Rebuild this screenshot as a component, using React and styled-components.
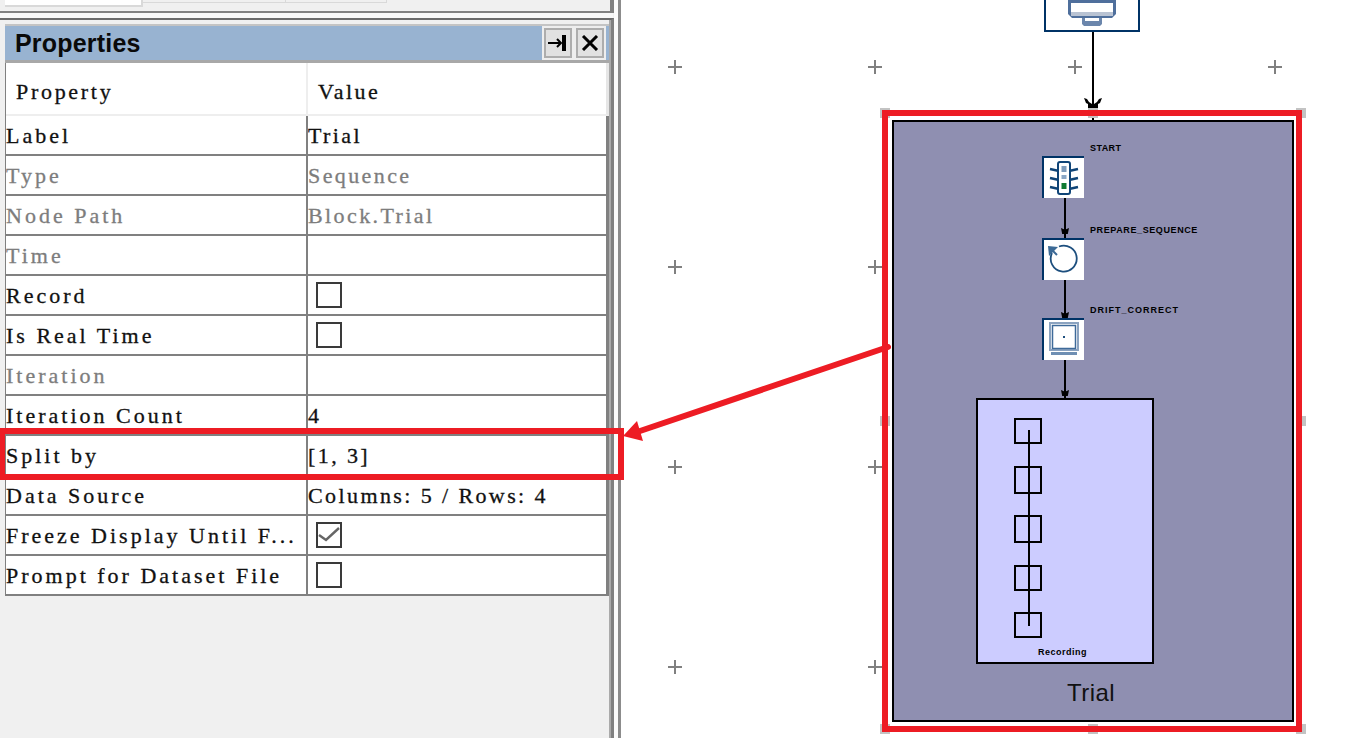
import React from "react";
import styled, { createGlobalStyle } from "styled-components";

const GlobalStyle = createGlobalStyle`
  html, body {
    margin: 0;
    padding: 0;
    background: #fff;
    overflow: hidden;
  }
`;

const Page = styled.div`
  position: relative;
  display: flex;
  width: 1368px;
  height: 738px;
  overflow: hidden;
  background: #fff;
`;

const Sidebar = styled.div`
  display: flex;
  flex-direction: column;
  width: 614px;
  height: 100%;
  flex: none;
  background: #f0f0f0;
`;

const TopStrip = styled.div`
  display: flex;
  height: 11px;
  flex: none;
  padding-left: 5px;
  border-bottom: 2px solid #808080;
  border-right: 4px solid #808080;
`;

const ActiveTab = styled.div`
  width: 136px;
  height: 5px;
  background: #fff;
  border: solid #d9d9d9;
  border-width: 0 2px 2px 0;
`;

const OtherTab = styled.div`
  width: ${(p) => p.$w}px;
  height: 2px;
  border: solid #d9d9d9;
  border-width: 0 1px 1px 0;
`;

const Gap = styled.div`
  height: 5px;
  flex: none;
  background: #f7f7f7;
  margin-right: 1px;
`;

const Panel = styled.div`
  flex: 1;
  display: flex;
  flex-direction: column;
  min-height: 0;
  border-top: 2px solid #696969;
  border-right: 3px solid #808080;
  padding: 4px 2px 0 5px;
  box-shadow: inset -2px 0 #aaa;
`;

const TitleBar = styled.div`
  display: flex;
  align-items: center;
  justify-content: space-between;
  height: 34px;
  flex: none;
  padding: 0 3px 0 10px;
  background: #98b3d1;
  border-top: 2px solid #c4c4c4;
  border-bottom: 3px solid #a8a8a8;
  font: bold 25px "Liberation Sans", sans-serif;
  letter-spacing: 0.2px;
  color: #0a0a0a;
`;

const TitleButtons = styled.div`
  display: flex;
  gap: 4px;
  align-self: stretch;
  padding: 2px 2px;
  background: #eee;
`;

const TitleButton = styled.div`
  display: flex;
  align-items: center;
  justify-content: center;
  width: 28px;
  box-sizing: border-box;
  background: #e1e1e1;
  border: 2px solid #adadad;
`;

const Table = styled.div`
  display: flex;
  flex-direction: column;
  border-left: 1px solid #808080;
  font: 22px "Liberation Serif", serif;
  -webkit-text-stroke: 0.3px currentColor;
  color: #111;
`;

const Row = styled.div`
  display: grid;
  grid-template-columns: 300px 1fr;
  height: ${(p) => (p.$head ? "53px" : "40px")};
  box-sizing: border-box;
  background: #fff;
  border-bottom: 2px solid ${(p) => (p.$head ? "#eee" : "#808080")};
  border-right: 3px solid ${(p) => (p.$head ? "#e6e6e6" : "#808080")};
  color: ${(p) => (p.$muted ? "#7d7d7d" : "#111")};
`;

const Cell = styled.div`
  display: flex;
  align-items: center;
  white-space: nowrap;
  overflow: hidden;
  letter-spacing: ${(p) => (p.$head ? "2.7px" : "3px")};
  padding-left: ${(p) => (p.$head ? "10px" : "0")};
  padding-top: ${(p) => (p.$head ? "6px" : "1px")};
`;

const ValueCell = styled(Cell)`
  letter-spacing: 2.4px;
  border-left: 2px solid ${(p) => (p.$head ? "#eee" : "#808080")};
  padding-top: ${(p) => (p.$check ? "0" : p.$head ? "6px" : "1px")};
`;

const Check = styled.div`
  display: flex;
  align-items: center;
  justify-content: center;
  width: 26px;
  height: 26px;
  box-sizing: border-box;
  margin-left: 8px;
  background: #fff;
  border: 2px solid #3a3a3a;
`;

const Splitter = styled.div`
  width: 7px;
  height: 100%;
  flex: none;
  box-sizing: border-box;
  background: #fbfbfb;
  border-right: 3px solid #8c8c8c;
`;

const PlusGrid = styled.div`
  position: absolute;
  left: 668px;
  top: 60px;
  display: grid;
  grid-template-columns: repeat(4, 14px);
  grid-auto-rows: 14px;
  column-gap: 186px;
  row-gap: 186px;
`;

const Plus = styled.div`
  width: 14px;
  height: 14px;
  background:
    linear-gradient(#808080, #808080) center / 14px 2px no-repeat,
    linear-gradient(#808080, #808080) center / 2px 14px no-repeat;
`;

const TopNode = styled.div`
  position: absolute;
  left: 1044px;
  top: -10px;
  width: 96px;
  height: 42px;
  box-sizing: border-box;
  display: flex;
  justify-content: center;
  align-items: flex-start;
  padding-top: 8px;
  border: 2px solid #003366;
  background: #fff;
`;

const Wire = styled.div`
  position: ${(p) => (p.$free ? "absolute" : "relative")};
  left: ${(p) => (p.$free ? `${p.$x}px` : "auto")};
  top: ${(p) => (p.$free ? `${p.$y}px` : "auto")};
  width: 2px;
  height: ${(p) => p.$h}px;
  margin-left: ${(p) => (p.$free ? "0" : "22px")};
  background: #000;
`;

const SmallHead = styled.div`
  position: absolute;
  left: -3px;
  bottom: ${(p) => p.$b}px;
  width: 8px;
  height: 6px;
  background: #000;
  clip-path: polygon(0 0, 50% 30%, 100% 0, 85% 100%, 15% 100%);
`;

const Group = styled.div`
  position: absolute;
  left: 892px;
  top: 120px;
  width: 402px;
  height: 602px;
  box-sizing: border-box;
  display: flex;
  flex-direction: column;
  padding-top: 34px;
  border: 2px solid #000;
  background: #8f8fb1;
`;

const Steps = styled.div`
  display: flex;
  flex-direction: column;
  align-self: flex-start;
  margin-left: 148px;
`;

const NodeBox = styled.div`
  position: relative;
  width: 42px;
  height: 42px;
  box-sizing: border-box;
  background: #fff;
  border-left: 2px solid #003366;
  border-top: 2px solid #003366;
  display: flex;
  align-items: center;
  justify-content: center;
`;

const NodeLabel = styled.div`
  position: absolute;
  left: 46px;
  top: -15px;
  font: bold 9px "Liberation Sans", sans-serif;
  line-height: 10px;
  letter-spacing: ${(p) => p.$ls}px;
  color: #000;
  white-space: nowrap;
`;

const Sequence = styled.div`
  position: relative;
  align-self: flex-start;
  margin-left: 82px;
  width: 178px;
  height: 266px;
  box-sizing: border-box;
  display: flex;
  flex-direction: column;
  align-items: flex-start;
  gap: 21.5px;
  padding: 18px 0 0 36px;
  border: 2px solid #000;
  background: #ccccff;
`;

const SeqSquare = styled.div`
  width: 28px;
  height: ${(p) => p.$h}px;
  box-sizing: border-box;
  border: 2px solid #000;
  flex: none;
`;

const SeqLine = styled.div`
  position: absolute;
  left: 50px;
  top: 30px;
  width: 2px;
  height: 196px;
  background: #000;
`;

const SeqLabel = styled.div`
  position: absolute;
  left: 60px;
  bottom: 5px;
  font: bold 9px "Liberation Sans", sans-serif;
  line-height: 10px;
  letter-spacing: 0.5px;
  color: #000;
`;

const GroupName = styled.div`
  align-self: center;
  margin: 15px 0 0 -4px;
  font: 24px "Liberation Sans", sans-serif;
  line-height: 28px;
  letter-spacing: 0.4px;
  color: #111;
`;

const Handle = styled.div`
  position: absolute;
  left: ${(p) => p.$x}px;
  top: ${(p) => p.$y}px;
  width: 10px;
  height: 10px;
  background: #c3c3c3;
`;

const RedBox = styled.div`
  position: absolute;
  left: ${(p) => p.$x}px;
  top: ${(p) => p.$y}px;
  width: ${(p) => p.$w}px;
  height: ${(p) => p.$h}px;
  box-sizing: border-box;
  border: 6px solid #ed1c24;
`;

const Overlay = styled.svg`
  position: absolute;
  left: 0;
  top: 0;
  pointer-events: none;
`;

const DrawnHead = styled.svg`
  position: absolute;
  left: 1084px;
  top: 98px;
`;

const rows = [
  { k: "Label", v: "Trial" },
  { k: "Type", v: "Sequence", muted: true },
  { k: "Node Path", v: "Block.Trial", muted: true },
  { k: "Time", v: "", muted: true },
  { k: "Record", check: "off" },
  { k: "Is Real Time", check: "off" },
  { k: "Iteration", v: "", muted: true },
  { k: "Iteration Count", v: "4" },
  { k: "Split by", v: "[1, 3]" },
  { k: "Data Source", v: "Columns: 5 / Rows: 4" },
  { k: "Freeze Display Until F...", check: "on" },
  { k: "Prompt for Dataset File", check: "off" },
];

const handles = [
  [880, 108], [1296, 108], [880, 416], [1296, 416],
  [880, 724], [1296, 724], [1088, 724], [1088, 108],
];

const seqHeights = [26, 28, 28, 26, 26];

function PinIcon() {
  return (
    <svg width="20" height="18" viewBox="0 0 20 18">
      <path d="M0 9h13" stroke="#000" strokeWidth="2" />
      <path d="M9 5l4 4-4 4" stroke="#000" strokeWidth="2" fill="none" />
      <rect x="14" y="1" width="4" height="16" fill="#000" />
    </svg>
  );
}

function CloseIcon() {
  return (
    <svg width="18" height="16" viewBox="0 0 18 16">
      <path d="M2 1l14 14M16 1L2 15" stroke="#000" strokeWidth="3" />
    </svg>
  );
}

function Tick() {
  return (
    <svg width="22" height="22" viewBox="0 0 22 22">
      <path d="M1 11l7 5L21 4" stroke="#666" strokeWidth="2.4" fill="none" />
    </svg>
  );
}

function LightIcon() {
  return (
    <svg width="30" height="34" viewBox="0 0 30 34">
      <path d="M1 8l9 2M29 8l-9 2M1 17l9 2M29 17l-9 2M1 26l9 2M29 26l-9 2" stroke="#0f4477" strokeWidth="2.5" />
      <rect x="9" y="1" width="12" height="32" rx="2" fill="#fff" stroke="#0f4477" strokeWidth="2" />
      <rect x="12.5" y="5" width="5" height="6" fill="#7d9bbb" />
      <rect x="12.5" y="14" width="5" height="4" fill="#8aa7c6" />
      <rect x="12.5" y="22" width="5" height="6" fill="#0f7a32" />
    </svg>
  );
}

function LoopIcon() {
  return (
    <svg width="34" height="34" viewBox="0 0 34 34">
      <path d="M12 3.5A13 13 0 1 1 5 10" stroke="#1d4f7e" strokeWidth="1.8" fill="none" />
      <path d="M1 3l10 1-9 9z" fill="#3c6a96" />
      <path d="M4 6l6 6" stroke="#3c6a96" strokeWidth="2" />
    </svg>
  );
}

function MonitorIcon() {
  return (
    <svg width="30" height="36" viewBox="0 0 30 36">
      <rect x="1" y="1" width="28" height="27" fill="#fff" stroke="#8ba3c0" strokeWidth="2" />
      <rect x="3.5" y="3.5" width="23" height="23" fill="#fff" stroke="#3e6a99" strokeWidth="1.5" />
      <rect x="14" y="14" width="2" height="2" fill="#1d4f7e" />
      <path d="M2 30h26v3H2z" fill="#6f8fb3" />
    </svg>
  );
}

function PrinterIcon() {
  return (
    <svg width="48" height="26" viewBox="0 0 48 26">
      <path d="M0 0h48v14l-4 4H4l-4-4z" fill="#4f6f9c" />
      <rect x="3" y="3" width="42" height="9" fill="#fff" />
      <rect x="3" y="12" width="42" height="4" fill="#b9c3d3" />
      <path d="M14 18h20v6l-2 2H16l-2-2z" fill="#6b86ac" />
      <rect x="17" y="18" width="14" height="3" fill="#fff" />
    </svg>
  );
}

export default function App() {
  return (
    <Page>
      <GlobalStyle />
      <Sidebar>
        <TopStrip>
          <ActiveTab />
          <OtherTab $w={142} />
          <OtherTab $w={100} />
        </TopStrip>
        <Gap />
        <Panel>
          <TitleBar>
            Properties
            <TitleButtons>
              <TitleButton><PinIcon /></TitleButton>
              <TitleButton><CloseIcon /></TitleButton>
            </TitleButtons>
          </TitleBar>
          <Table>
            <Row $head>
              <Cell $head>Property</Cell>
              <ValueCell $head>Value</ValueCell>
            </Row>
            {rows.map((r) => (
              <Row key={r.k} $muted={r.muted}>
                <Cell>{r.k}</Cell>
                <ValueCell $check={!!r.check}>
                  {r.check ? <Check>{r.check === "on" && <Tick />}</Check> : r.v}
                </ValueCell>
              </Row>
            ))}
          </Table>
        </Panel>
      </Sidebar>
      <Splitter />

      <PlusGrid>
        {Array.from({ length: 16 }, (_, i) => <Plus key={i} />)}
      </PlusGrid>

      <TopNode><PrinterIcon /></TopNode>
      <Wire $free $x={1092} $y={32} $h={78} />
      <Wire $free $x={1092} $y={116} $h={6} />
      <DrawnHead width="18" height="12" viewBox="0 0 18 12">
        <path d="M0 0l3 1 2 3 3 2h2l3-2 2-3 3-1-2 5-2 1v6H4V6L2 5z" fill="#000" />
      </DrawnHead>

      <Group>
        <Steps>
          <NodeBox>
            <NodeLabel $ls={0.4}>START</NodeLabel>
            <LightIcon />
          </NodeBox>
          <Wire $h={40}><SmallHead $b={4} /></Wire>
          <NodeBox>
            <NodeLabel $ls={0.6}>PREPARE_SEQUENCE</NodeLabel>
            <LoopIcon />
          </NodeBox>
          <Wire $h={38}><SmallHead $b={0} /></Wire>
          <NodeBox>
            <NodeLabel $ls={1}>DRIFT_CORRECT</NodeLabel>
            <MonitorIcon />
          </NodeBox>
          <Wire $h={38}><SmallHead $b={2} /></Wire>
        </Steps>
        <Sequence>
          {seqHeights.map((h, i) => <SeqSquare key={i} $h={h} />)}
          <SeqLine />
          <SeqLabel>Recording</SeqLabel>
        </Sequence>
        <GroupName>Trial</GroupName>
      </Group>

      {handles.map(([x, y]) => <Handle key={x + "-" + y} $x={x} $y={y} />)}
      <RedBox $x={882} $y={110} $w={420} $h={622} />
      <RedBox $x={-1} $y={428} $w={625} $h={52} />

      <Overlay width="1368" height="738" viewBox="0 0 1368 738">
        <path d="M888 347L640 431" stroke="#ed1c24" strokeWidth="6" strokeLinecap="round" />
        <path d="M623 436L637 421L640 431L643 441z" fill="#ed1c24" />
      </Overlay>
    </Page>
  );
}
